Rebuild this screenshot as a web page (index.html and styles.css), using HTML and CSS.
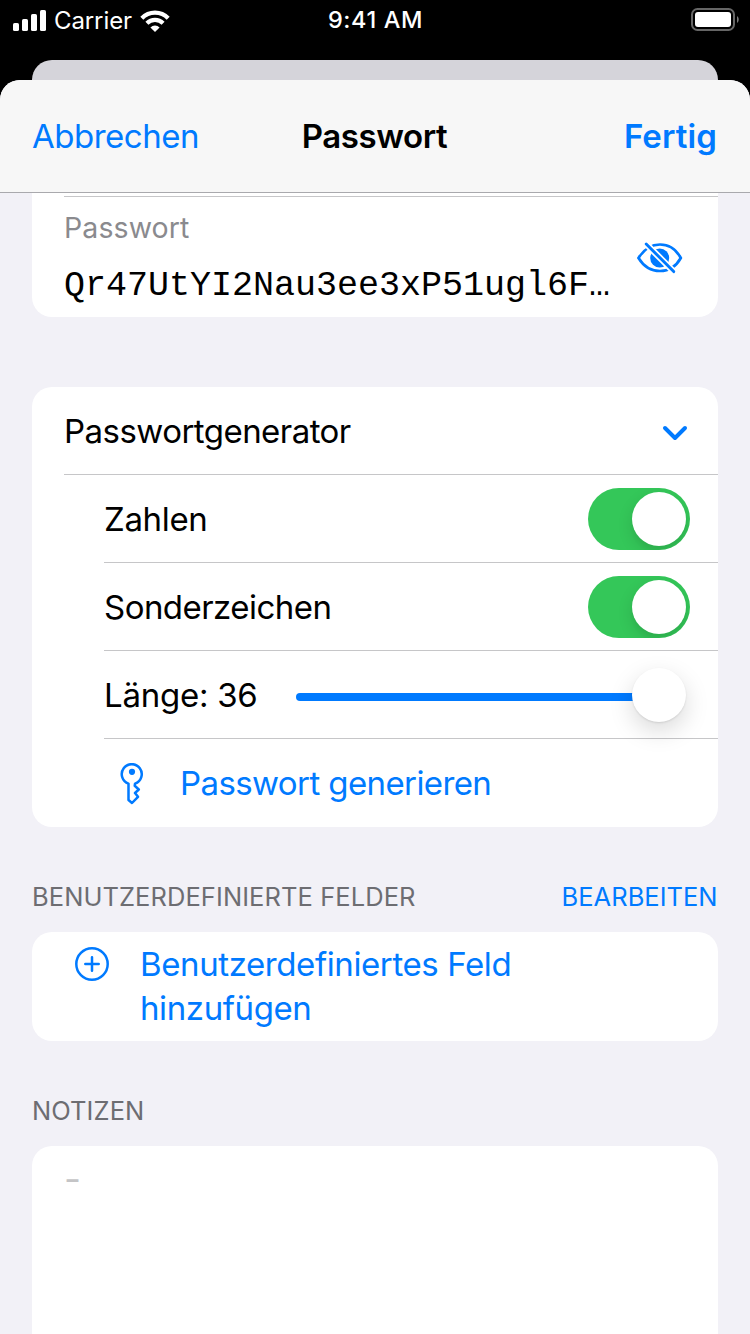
FILE: index.html
```html
<!DOCTYPE html>
<html lang="de">
<head>
<meta charset="utf-8">
<title>Passwort</title>
<link rel="stylesheet" href="styles.css">
</head>
<body>
<div class="screen">
  <header class="status">
    <div class="status-left">
      <svg class="signal" width="34" height="22" viewBox="0 0 34 22" fill="#fff"><rect x="0" y="13" width="6" height="8" rx="1.6"/><rect x="9" y="9" width="6" height="12" rx="1.6"/><rect x="18" y="4" width="6" height="17" rx="1.6"/><rect x="27" y="0" width="6" height="21" rx="1.6"/></svg>
      <span class="carrier">Carrier</span>
      <svg class="wifi" width="30" height="22" viewBox="0 0 30 22" fill="none" stroke="#fff" stroke-width="4.200"><path d="M1.800 8.200A18.500 18.500 0 0 1 28.200 8.200"/><path d="M6.900 13.300A11.500 11.500 0 0 1 23.100 13.300"/><path d="M15 22 10.400 17.400A6.500 6.500 0 0 1 19.600 17.400Z" fill="#fff" stroke="none"/></svg>
    </div>
    <span class="clock">9:41 AM</span>
    <svg class="battery" width="48" height="24" viewBox="0 0 48 24"><rect x="1" y="1" width="42" height="21" rx="5.500" fill="none" stroke="#666" stroke-width="2"/><rect x="4" y="4" width="36" height="15" rx="3" fill="#fff"/><path d="M46 8C48.300 9.500 48.300 13.500 46 15Z" fill="#777"/></svg>
  </header>
  <div class="back-card"></div>
  <main class="sheet">
    <nav class="nav">
      <span class="cancel">Abbrechen</span>
      <h1 class="title">Passwort</h1>
      <span class="done">Fertig</span>
    </nav>
    <div class="content">
      <section class="card password-card">
        <div class="password-row">
          <div class="password-text">
            <span class="field-label">Passwort</span>
            <span class="field-value">Qr47UtYI2Nau3ee3xP51ugl6F…</span>
          </div>
          <svg class="eye" width="46" height="32" viewBox="0 0 46 32" fill="none"><path d="M1.500 16C7 7 14.500 2.500 23 2.500S39 7 43.800 16C39 24.500 31.500 29 23 29S7 25 1.500 16Z" stroke="#007aff" stroke-width="2.700"/><circle cx="22.700" cy="16" r="9.500" fill="#007aff"/><path d="M6 -1.200 40 32.900" stroke="#fff" stroke-width="6.400"/><path d="M9.200 2 36.700 29.600" stroke="#007aff" stroke-width="2.900" stroke-linecap="round"/></svg>
        </div>
      </section>
      <section class="card generator">
        <div class="row head-row"><span>Passwortgenerator</span>
          <svg class="chevron" width="26" height="16" viewBox="0 0 26 16" fill="none" stroke="#007aff" stroke-width="4" stroke-linecap="round" stroke-linejoin="round"><path d="M3 3 13 13 23 3"/></svg></div>
        <div class="row sub-row"><span class="numbers">Zahlen</span><span class="switch"><span class="knob"></span></span></div>
        <div class="row sub-row"><span>Sonderzeichen</span><span class="switch"><span class="knob"></span></span></div>
        <div class="row sub-row"><span class="length">Länge: 36</span><span class="slider"><span class="track"></span><span class="thumb"></span></span></div>
        <div class="row sub-row action">
          <svg class="key" width="24" height="42" viewBox="0 0 24 42" fill="none" stroke="#007aff" stroke-width="2.500" stroke-linejoin="round"><path d="M8.500 20.600A10 10 0 1 1 15 20.600L14.700 22.800 18.800 26.500 15 30 18 33.800 12 40 8.500 37Z"/><circle cx="12" cy="8.800" r="3.100" fill="#007aff" stroke="none"/></svg>
          <span class="generate">Passwort generieren</span></div>
      </section>
      <div class="section-head"><span>BENUTZERDEFINIERTE FELDER</span><span class="edit">BEARBEITEN</span></div>
      <section class="card add-card">
        <svg class="plus" width="34" height="34" viewBox="0 0 34 34" fill="none" stroke="#007aff" stroke-width="2.500" stroke-linecap="round"><circle cx="17" cy="17" r="15.700"/><path d="M10.300 17H23.700M17 10.300V23.700"/></svg>
        <span class="add-text">Benutzerdefiniertes Feld<br>hinzufügen</span>
      </section>
      <div class="section-head"><span>NOTIZEN</span></div>
      <section class="card notes"><span class="dash">-</span></section>
    </div>
  </main>
</div>
</body>
</html>
```
FILE: styles.css
```css
* { box-sizing: border-box; }
body { margin: 0; font-family: Inter, "Liberation Sans", sans-serif; font-size: 33px; line-height: 44px; color: #000; background: #000; }
.screen { width: 750px; height: 1334px; overflow: hidden; display: flex; flex-direction: column; background: #000; }
.status { height: 60px; flex: none; display: grid; grid-template-columns: 1fr auto 1fr; padding: 0 11px 20px 13px; align-items: center; color: #fff; font-size: 24px; line-height: 40px; }
.status-left { display: flex; align-items: center; height: 40px; }
.signal, .wifi { margin-top: 1px; }
.carrier { margin-left: 7px; letter-spacing: -.1px; padding-top: 1px; }
.wifi { margin-left: 8px; }
.clock { font-weight: 500; font-size: 23.500px; letter-spacing: .6px; margin-right: 1px; }
.battery { justify-self: end; }
.back-card { height: 40px; flex: none; margin: 0 32px -20px; border-radius: 20px 20px 0 0; background: #d5d4da; }
.sheet { flex: 1; min-height: 0; border-radius: 20px 20px 0 0; background: #f2f1f7; overflow: hidden; }
.nav { height: 113px; display: grid; grid-template-columns: 1fr auto 1fr; align-items: center; padding: 0 33px 0 32px; background: #f7f7f7; border-bottom: 1px solid #a9a9ad; white-space: nowrap; }
.cancel, .done, .action, .edit, .add-card { color: #007aff; }
.cancel { letter-spacing: -.5px; }
.done { justify-self: end; font-weight: 600; letter-spacing: .1px; }
.title { margin: 0; font-size: 33px; font-weight: 600; letter-spacing: -.4px; }
.content { padding: 0 32px; }
.card { background: #fff; border-radius: 20px; }
.password-card { height: 124px; padding: 3px 0 0 32px; border-radius: 0 0 20px 20px; }
.password-row { border-top: 1px solid #c6c6c8; display: flex; padding: 9px 35px 0 0; justify-content: space-between; }
.password-text { display: flex; flex-direction: column; align-items: flex-start; white-space: nowrap; }
.field-label { color: #8a8a8e; font-size: 28.500px; letter-spacing: .1px; }
.field-value { font-family: "Liberation Mono", monospace; font-size: 35px; line-height: 44px; margin-top: 14px; }
.eye { margin-top: 36px; }
.generator { margin-top: 70px; height: 440px; padding-left: 32px; }
.row { height: 88px; display: flex; align-items: center; justify-content: space-between; border-bottom: 1px solid #c6c6c8; padding-right: 28px; white-space: nowrap; letter-spacing: -.54px; }
.sub-row { margin-left: 40px; }
.numbers { letter-spacing: -.35px; }
.length { letter-spacing: -.25px; }
.action { border: 0; justify-content: flex-start; padding-left: 16px; }
.key { margin-top: 1px; }
.generate { margin-left: 36px; letter-spacing: -.6px; }
.switch { width: 102px; height: 62px; border-radius: 31px; background: #34c759; display: flex; justify-content: flex-end; padding: 4px; overflow: hidden; }
.knob { width: 54px; height: 54px; border-radius: 50%; background: #fff; box-shadow: 0 6px 16px rgba(0,0,0,.12), 0 5px 4px rgba(0,0,0,.03); }
.slider { display: flex; align-items: center; width: 390px; margin-right: 4px; }
.track { flex: 1; height: 8px; border-radius: 4px 0 0 4px; background: #007aff; margin: 5px -5px 0 0; }
.thumb { width: 54px; height: 54px; border-radius: 50%; background: #fff; box-shadow: 0 1px 2px rgba(0,0,0,.1), 0 9px 25px rgba(0,0,0,.15); position: relative; }
.chevron { margin: 5px 2px 0 0; }
.section-head { margin-top: 54px; display: flex; justify-content: space-between; color: #6d6d72; font-size: 25.500px; line-height: 32px; letter-spacing: .07px; white-space: nowrap; }
.edit { padding-right: .5px; letter-spacing: 0; }
.add-card { margin-top: 19px; height: 109px; padding: 10px 43px; display: flex; align-items: flex-start; letter-spacing: -.4px; }
.plus { margin-top: 5px; }
.add-text { margin-left: 31px; }
.notes { margin-top: 19px; height: 220px; padding: 11px 32px; color: #c4c4c6; }
.dash { display: inline-block; transform: scaleX(1.12); transform-origin: left; }
```
